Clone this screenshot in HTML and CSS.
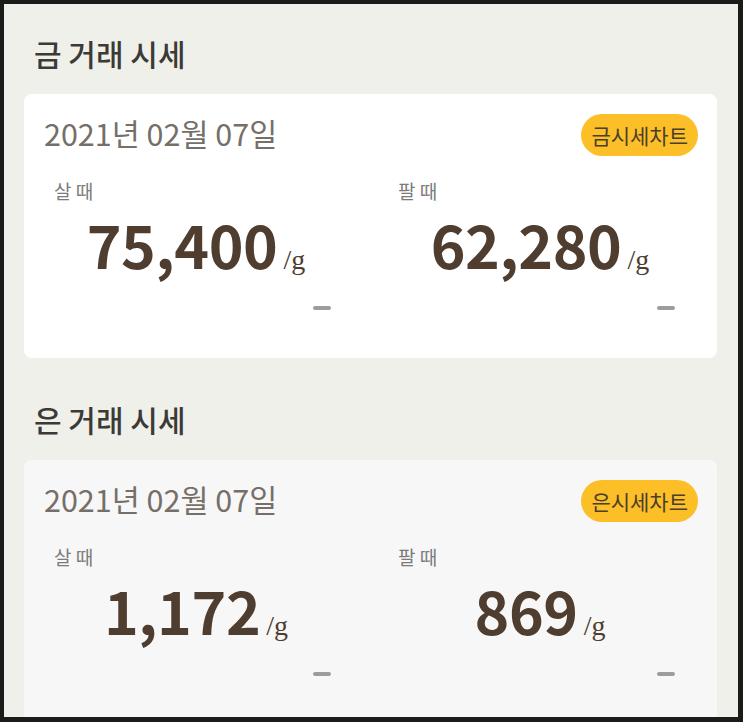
FILE: index.html
```html
<!doctype html>
<html>

<head>
  <meta charset="UTF-8" />
  <meta name="viewport" content="width=device-width, initial-scale=1.0" />
  <title>금/은 거래 시세</title>
  <link rel="stylesheet" href="styles.css">
</head>

<body>
  <div class="screen">
    <h2 class="section-title">금 거래 시세</h2>
    <div class="card">
      <div class="card-head">
        <div class="date">2021년 02월 07일</div>
        <button class="chart-btn">금시세차트</button>
      </div>
      <div class="prices">
        <div class="price">
          <div class="label">살 때</div>
          <div class="value"><span class="num">75,400</span><span class="unit">/g</span></div>
          <div class="change"></div>
        </div>
        <div class="price">
          <div class="label">팔 때</div>
          <div class="value"><span class="num">62,280</span><span class="unit">/g</span></div>
          <div class="change"></div>
        </div>
      </div>
    </div>

    <h2 class="section-title">은 거래 시세</h2>
    <div class="card silver">
      <div class="card-head">
        <div class="date">2021년 02월 07일</div>
        <button class="chart-btn">은시세차트</button>
      </div>
      <div class="prices">
        <div class="price">
          <div class="label">살 때</div>
          <div class="value"><span class="num">1,172</span><span class="unit">/g</span></div>
          <div class="change"></div>
        </div>
        <div class="price">
          <div class="label">팔 때</div>
          <div class="value"><span class="num">869</span><span class="unit">/g</span></div>
          <div class="change"></div>
        </div>
      </div>
    </div>
  </div>
</body>

</html>
```

FILE: styles.css
```css
html,
body {
  margin: 0;
  height: 100%;
  background-color: #1b1b1a;
}

body {
  padding: 4px 5px 5px 4px;
  box-sizing: border-box;
  font-family: "Noto Sans CJK KR", "Noto Sans", sans-serif;
}

.screen {
  height: 713px;
  overflow: hidden;
  background-color: #f0f0eb;
  padding: 0 21px 0 20px;
}

.section-title {
  margin: 28px 0 20px;
  padding-left: 10px;
  font-size: 30px;
  line-height: 42px;
  font-weight: 500;
  color: #3c3a36;
}

.card + .section-title {
  margin-top: 40px;
}

.card {
  background-color: white;
  border-radius: 8px;
  padding: 20px 19px 48px 20px;
}

.card.silver {
  background-color: #f7f7f7;
}

.card-head {
  display: flex;
  justify-content: space-between;
  align-items: flex-start;
}

.date {
  margin-top: -1px;
  font-size: 30.5px;
  line-height: 40px;
  color: #766f69;
}

.chart-btn {
  height: 42px;
  padding: 0 10px;
  border: none;
  border-radius: 21px;
  background-color: #fcbf27;
  color: #4b3e2b;
  font-family: inherit;
  font-size: 21px;
}

.prices {
  display: grid;
  grid-template-columns: 1fr 1fr;
  margin: 22px -14px 0 -20px;
}

.label {
  padding-left: 30px;
  font-size: 19px;
  line-height: 26px;
  color: #7b7b7b;
}

.value {
  margin-top: 10px;
  text-align: center;
  color: #4f3e30;
}

.num {
  font-size: 59px;
  line-height: 60px;
  font-weight: 700;
  letter-spacing: -0.4px;
}

.unit {
  margin-left: 6px;
  font-family: "Liberation Serif", serif;
  font-size: 28px;
}

.change {
  width: 18px;
  height: 4px;
  margin: 30px 37px 0 auto;
  border-radius: 2px;
  background-color: #9c9c9c;
}
```
